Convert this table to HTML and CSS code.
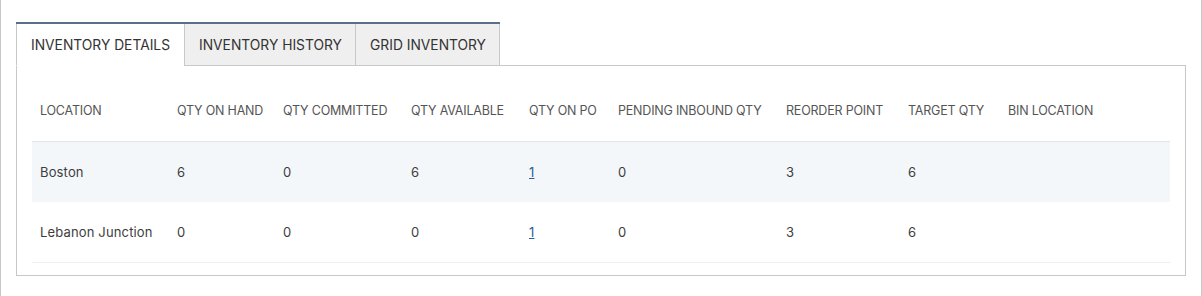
FILE: index.html
```html
<!DOCTYPE html>
<html lang="en">
<head>
<meta charset="utf-8">
<title>Inventory</title>
<link rel="stylesheet" href="styles.css">
</head>
<body>
<div class="page">
  <div class="tabs">
    <div class="tab tab-details active">INVENTORY DETAILS</div>
    <div class="tab tab-history">INVENTORY HISTORY</div>
    <div class="tab tab-grid">GRID INVENTORY</div>
  </div>
  <div class="panel">
    <table class="inv">
      <colgroup>
        <col style="width:137px"><col style="width:106px"><col style="width:128px"><col style="width:118px"><col style="width:89px"><col style="width:168px"><col style="width:122px"><col style="width:100px"><col>
      </colgroup>
      <thead>
        <tr>
          <th>LOCATION</th><th>QTY ON HAND</th><th>QTY COMMITTED</th><th>QTY AVAILABLE</th><th>QTY ON PO</th><th>PENDING INBOUND QTY</th><th>REORDER POINT</th><th>TARGET QTY</th><th>BIN LOCATION</th>
        </tr>
      </thead>
      <tbody>
        <tr class="alt">
          <td>Boston</td><td>6</td><td>0</td><td>6</td><td><a href="#">1</a></td><td>0</td><td>3</td><td>6</td><td></td>
        </tr>
        <tr>
          <td>Lebanon Junction</td><td>0</td><td>0</td><td>0</td><td><a href="#">1</a></td><td>0</td><td>3</td><td>6</td><td></td>
        </tr>
      </tbody>
    </table>
  </div>
</div>
</body>
</html>
```
FILE: styles.css
```css
html, body {
  margin: 0;
  padding: 0;
  background: #fff;
}

body {
  font-family: Inter, "Liberation Sans", sans-serif;
  font-size: 13px;
  color: #3d3d3d;
}

.page {
  height: 296px;
  box-sizing: border-box;
  border-left: 1px solid #c8c8c8;
  border-right: 1px solid #c8c8c8;
  padding: 22px 15px 0 15px;
}

.tabs {
  display: flex;
  width: 484px;
  border-top: 2px solid #5b6f87;
}

.tab {
  box-sizing: border-box;
  height: 42px;
  display: flex;
  align-items: center;
  padding: 0 0 0 14px;
  background: #efefef;
  border-bottom: 1px solid #c8c8c8;
  border-left: 1px solid #c8c8c8;
  color: #333;
  font-size: 13.8px;
  white-space: nowrap;
  overflow: hidden;
}

.tab-details { width: 168px; }
.tab-history { width: 171px; }
.tab-grid {
  width: 145px;
  border-right: 1px solid #c8c8c8;
}

.tab.active {
  background: #fff;
  border-bottom-color: #fff;
}

.panel {
  margin-top: -1px;
  border: 1px solid #c8c8c8;
  padding: 11px 15px 14px 15px;
  height: 211px;
  box-sizing: border-box;
}

.inv {
  width: 100%;
  border-collapse: collapse;
  table-layout: fixed;
}

.inv th {
  text-align: left;
  font-weight: normal;
  font-size: 12.5px;
  color: #555;
  height: 62px;
  padding: 2px 8px 0 8px;
  border-bottom: 1px solid #e2e4e7;
  letter-spacing: -0.2px;
  white-space: nowrap;
}

.inv td {
  height: 60px;
  padding: 0 8px;
  border-bottom: 1px solid #eceeef;
  color: #3d3d3d;
  letter-spacing: 0.15px;
  white-space: nowrap;
}

.inv tr.alt td {
  background: #f4f7fa;
  border-bottom: none;
}

.inv a {
  color: #2b5f93;
  text-decoration: underline;
}
```
